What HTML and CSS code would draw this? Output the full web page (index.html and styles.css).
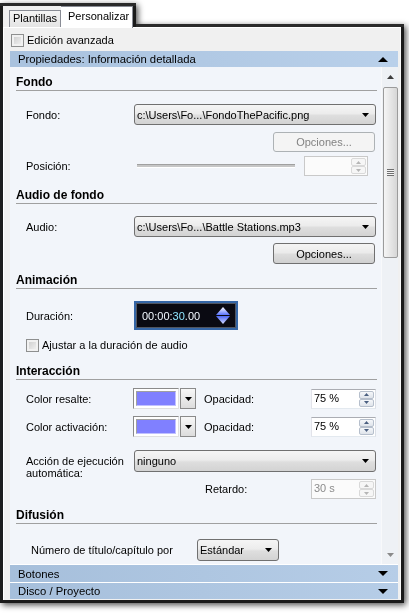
FILE: index.html
```html
<!DOCTYPE html>
<html lang="es">
<head>
<meta charset="utf-8">
<title>Personalizar</title>
<link rel="stylesheet" href="styles.css">
</head>
<body>
<div class="window">
  <div class="tabstrip">
    <div class="tab">Plantillas</div>
    <div class="tab active">Personalizar</div>
  </div>
  <div class="page">
    <div class="adv"><span class="chk"></span><span>Edición avanzada</span></div>
    <div class="props">
      <div class="bar">
        <span>Propiedades: Información detallada</span>
        <svg class="tri" width="10" height="5" viewBox="0 0 10 5"><path d="M0 5H10L5 0Z"/></svg>
      </div>
      <div class="content">
        <div class="main">
          <div class="title">Fondo</div>
          <div class="row r21 m13">
            <span class="lbl">Fondo:</span>
            <div class="combo wide"><span class="ctext">c:\Users\Fo...\FondoThePacific.png</span><svg class="dd" width="7" height="4" viewBox="0 0 7 4"><path d="M0 0H7L3.5 4Z"/></svg></div>
          </div>
          <div class="row r20 m7">
            <div class="btn disabled">Opciones...</div>
          </div>
          <div class="row r20 m4">
            <span class="lbl">Posición:</span>
            <div class="slider"></div>
            <div class="spin disabled pos">
              <span class="val"></span>
              <div class="spinbtns">
                <div class="sb"><svg width="5" height="3" viewBox="0 0 5 3"><path d="M0 3H5L2.5 0Z"/></svg></div>
                <div class="sb"><svg width="5" height="3" viewBox="0 0 5 3"><path d="M0 0H5L2.5 3Z"/></svg></div>
              </div>
            </div>
          </div>

          <div class="title m11">Audio de fondo</div>
          <div class="row r21 m12">
            <span class="lbl">Audio:</span>
            <div class="combo wide"><span class="ctext">c:\Users\Fo...\Battle Stations.mp3</span><svg class="dd" width="7" height="4" viewBox="0 0 7 4"><path d="M0 0H7L3.5 4Z"/></svg></div>
          </div>
          <div class="row r21 m6">
            <div class="btn">Opciones...</div>
          </div>

          <div class="title m8">Animación</div>
          <div class="row r29 m12">
            <span class="lbl">Duración:</span>
            <div class="timebox">
              <span class="time">00:00:<span class="hl">30</span>.00</span>
              <svg class="tarrows" width="16" height="19" viewBox="0 0 16 19">
                <defs>
                  <linearGradient id="gu" x1="0" y1="0" x2="0" y2="1"><stop offset="0" stop-color="#ffffff"/><stop offset="1" stop-color="#5873ff"/></linearGradient>
                  <linearGradient id="gd" x1="0" y1="0" x2="0" y2="1"><stop offset="0" stop-color="#4c66f5"/><stop offset="1" stop-color="#d4dcff"/></linearGradient>
                </defs>
                <path d="M8 1L15 9H1Z" fill="url(#gu)"/>
                <path d="M1 10H15L8 18Z" fill="url(#gd)"/>
              </svg>
            </div>
          </div>
          <div class="row r14 m8 indent">
            <span class="chk"></span><span>Ajustar a la duración de audio</span>
          </div>

          <div class="title m11">Interacción</div>
          <div class="row r21 m8">
            <span class="lbl">Color resalte:</span>
            <div class="colorpick"><div class="sw"><div class="fill"></div></div><div class="cbtn"><svg width="7" height="4" viewBox="0 0 7 4"><path d="M0 0H7L3.5 4Z"/></svg></div></div>
            <span class="lbl2">Opacidad:</span>
            <div class="spin right">
              <span class="val">75 %</span>
              <div class="spinbtns">
                <div class="sb"><svg width="5" height="3" viewBox="0 0 5 3"><path d="M0 3H5L2.5 0Z"/></svg></div>
                <div class="sb"><svg width="5" height="3" viewBox="0 0 5 3"><path d="M0 0H5L2.5 3Z"/></svg></div>
              </div>
            </div>
          </div>
          <div class="row r21 m7">
            <span class="lbl">Color activación:</span>
            <div class="colorpick"><div class="sw"><div class="fill"></div></div><div class="cbtn"><svg width="7" height="4" viewBox="0 0 7 4"><path d="M0 0H7L3.5 4Z"/></svg></div></div>
            <span class="lbl2">Opacidad:</span>
            <div class="spin right">
              <span class="val">75 %</span>
              <div class="spinbtns">
                <div class="sb"><svg width="5" height="3" viewBox="0 0 5 3"><path d="M0 3H5L2.5 0Z"/></svg></div>
                <div class="sb"><svg width="5" height="3" viewBox="0 0 5 3"><path d="M0 0H5L2.5 3Z"/></svg></div>
              </div>
            </div>
          </div>
          <div class="row top m13 racc">
            <span class="lbl two">Acción de ejecución automática:</span>
            <div class="combo wide tall"><span class="ctext">ninguno</span><svg class="dd" width="7" height="4" viewBox="0 0 7 4"><path d="M0 0H7L3.5 4Z"/></svg></div>
          </div>
          <div class="row r20 ret">
            <span>Retardo:</span>
            <div class="spin disabled right">
              <span class="val">30 s</span>
              <div class="spinbtns">
                <div class="sb"><svg width="5" height="3" viewBox="0 0 5 3"><path d="M0 3H5L2.5 0Z"/></svg></div>
                <div class="sb"><svg width="5" height="3" viewBox="0 0 5 3"><path d="M0 0H5L2.5 3Z"/></svg></div>
              </div>
            </div>
          </div>

          <div class="title m8">Difusión</div>
          <div class="row r22 m15 num">
            <span class="lbl3">Número de título/capítulo por</span>
            <div class="combo small tall"><span class="ctext">Estándar</span><svg class="dd" width="7" height="4" viewBox="0 0 7 4"><path d="M0 0H7L3.5 4Z"/></svg></div>
          </div>
        </div>
        <div class="vscroll">
          <div class="sarrow up"><svg width="7" height="4" viewBox="0 0 7 4"><path d="M0 4H7L3.5 0Z"/></svg></div>
          <div class="thumb"><span class="grip"></span></div>
          <div class="sarrow down"><svg width="7" height="4" viewBox="0 0 7 4"><path d="M0 0H7L3.5 4Z"/></svg></div>
        </div>
      </div>
      <div class="bar closed">
        <span>Botones</span>
        <svg class="tri" width="10" height="5" viewBox="0 0 10 5"><path d="M0 0H10L5 5Z"/></svg>
      </div>
      <div class="bar closed">
        <span>Disco / Proyecto</span>
        <svg class="tri" width="10" height="5" viewBox="0 0 10 5"><path d="M0 0H10L5 5Z"/></svg>
      </div>
    </div>
  </div>
</div>
</body>
</html>
```
FILE: styles.css
```css
* { box-sizing: border-box; }
html, body { margin: 0; padding: 0; background: #fff; }
body {
  width: 409px;
  height: 614px;
  overflow: hidden;
  font: 11px "Liberation Sans", Arial, sans-serif;
  color: #000;
}

.window {
  margin: 6px 0 0 3px;
  width: 398px;
  filter: drop-shadow(3px 0 0 #1a1a1a) drop-shadow(-3px 0 0 #1c1c1c) drop-shadow(0 3px 0 #1a1a1a) drop-shadow(0 -3px 0 #2a2a2a) drop-shadow(2px 2px 3px rgba(0,0,0,0.7));
}

/* tabs */
.tabstrip {
  display: flex;
  align-items: flex-end;
  width: 128px;
  height: 21px;
  padding-left: 6px;
  background: #f0f0f0;
}
.tab {
  height: 17px;
  padding: 0 3px;
  border: 1px solid #898c95;
  border-bottom: none;
  background: linear-gradient(#f4f4f4, #e4e4e4);
  line-height: 14px;
  white-space: nowrap;
}
.tab.active {
  position: relative;
  z-index: 1;
  width: 73px;
  height: 22px;
  margin-bottom: -1px;
  border-left: none;
  padding-left: 7px;
  background: #fff;
  line-height: 18px;
}

/* page */
.page {
  height: 573px;
  background: #f0f0f0;
  border-top: 1px solid #fff;
  border-left: 1px solid #fff;
  border-right: 1px solid #fafafa;
  display: flex;
  flex-direction: column;
}
.adv {
  display: flex;
  align-items: center;
  height: 20px;
  margin-top: 2px;
  padding-left: 7px;
}
.chk {
  width: 13px;
  height: 13px;
  margin-right: 3px;
  border: 1px solid #8e8f8f;
  background: linear-gradient(135deg, #c9c9c9, #f6f6f6);
  box-shadow: inset 0 0 0 2px #f1f1f1;
  flex: none;
}

.props {
  margin: 1px 2px 0 6px;
  display: flex;
  flex-direction: column;
}
.bar {
  height: 16px;
  display: flex;
  align-items: center;
  justify-content: space-between;
  padding: 0 10px 0 8px;
  background: linear-gradient(to right, #a9c2de, #b9d0ea);
  font-size: 11.3px;
}
.bar.closed {
  height: 18px;
  border-top: 1px solid #fff;
  background: linear-gradient(to right, #a6bfdb, #b6cde7);
}
.bar.closed + .bar.closed { height: 17px; }
.tri { display: block; fill: #000; }

.content {
  display: flex;
  height: 497px;
  background: #f2f5fa;
}
.main {
  flex: 1;
  overflow: hidden;
}

.title {
  margin: 7px 4px 0 6px;
  height: 17px;
  line-height: 16px;
  border-bottom: 1px solid #a0a0a0;
  font-weight: bold;
  font-size: 12px;
}
.m4 { margin-top: 4px; }
.m6 { margin-top: 6px; }
.m7 { margin-top: 7px; }
.m8 { margin-top: 8px; }
.m11 { margin-top: 11px; }
.m12 { margin-top: 12px; }
.m13 { margin-top: 13px; }
.m15 { margin-top: 15px; }

.row {
  display: flex;
  align-items: center;
  padding: 0 5px 0 16px;
}
.row.top { align-items: flex-start; }
.r14 { height: 14px; }
.r20 { height: 20px; }
.r21 { height: 21px; }
.r22 { height: 22px; }
.r29 { height: 29px; }
.indent { padding-left: 16px; }
.indent .chk { margin-right: 3px; }

.lbl { flex: 0 0 108px; }
.lbl.two { line-height: 12px; margin-top: 5px; padding-right: 8px; }
.racc { height: 29px; }
.ret { padding-left: 195px; }
.num { padding-left: 21px; }
.lbl3 { flex: 0 0 166px; }
.lbl2 { margin-left: 8px; }

/* combos & buttons */
.combo {
  display: flex;
  align-items: center;
  justify-content: space-between;
  height: 21px;
  padding: 0 6px 0 2px;
  border: 1px solid #707070;
  border-radius: 3px;
  background: linear-gradient(#f5f5f5, #ececec 45%, #dedede 55%, #d3d3d3);
  white-space: nowrap;
}
.combo.wide { width: 242px; }
.combo.tall { height: 22px; }
.combo.small { width: 82px; }
.dd { display: block; fill: #000; flex: none; }

.btn {
  margin-left: auto;
  margin-right: 1px;
  width: 102px;
  height: 100%;
  border: 1px solid #707070;
  border-radius: 3px;
  background: linear-gradient(#f4f4f4, #ebebeb 45%, #dddddd 55%, #d0d0d0);
  display: flex;
  align-items: center;
  justify-content: center;
}
.btn.disabled {
  border-color: #adb2b5;
  background: #f4f4f4;
  color: #838383;
}

/* slider */
.slider {
  margin-left: 3px;
  width: 158px;
  height: 4px;
  border-top: 1px solid #a0a0a0;
  border-bottom: 1px solid #fff;
  background: #c6c6c6;
}

/* spin boxes */
.spin {
  display: flex;
  height: 20px;
  padding: 1px;
  border: 1px solid;
  border-color: #abadb3 #dbdfe6 #e3e9ef #e2e3ea;
  background: #fff;
}
.spin.right { width: 65px; margin-left: auto; }
.spin.pos { width: 64px; margin-left: 9px; }
.val { flex: 1; padding-left: 1px; line-height: 15px; }
.spinbtns {
  width: 15px;
  display: flex;
  flex-direction: column;
}
.sb {
  flex: 1;
  display: flex;
  align-items: center;
  justify-content: center;
  border: 1px solid #b6bfcc;
  border-radius: 2px;
  background: linear-gradient(#f5f7fa, #dfe4eb);
}
.sb svg { display: block; fill: #4a5f80; }
.spin.disabled { border-color: #c9c9c9; background: #fbfbfb; color: #8b8b8b; }
.spin.disabled .sb { border-color: #d9d9d9; background: #f6f6f6; }
.spin.disabled .sb svg { fill: #b5b5b5; }

/* time */
.timebox {
  width: 104px;
  height: 29px;
  display: flex;
  align-items: center;
  justify-content: space-between;
  padding: 0 5px 0 6px;
  border: 2px solid #3566a6;
  box-shadow: inset 0 0 0 1px #505560;
  background: #0a0a12;
}
.time { color: #f2f8ff; font-size: 11px; }
.time .hl { color: #8fe6ff; }
.tarrows { display: block; }

/* color picker */
.colorpick {
  display: flex;
  width: 63px;
  height: 21px;
  margin-left: -1px;
}
.sw {
  width: 46px;
  height: 21px;
  padding: 2px;
  border: 1px solid;
  border-color: #8a8a8a #e0e0e0 #e0e0e0 #8a8a8a;
  background: #fff;
}
.fill {
  height: 100%;
  background: #8080ff;
  border: 1px solid;
  border-color: #a0a0a0 #c0c0ff #c0c0ff #a0a0a0;
}
.cbtn {
  width: 16px;
  height: 21px;
  margin-left: 1px;
  display: flex;
  align-items: center;
  justify-content: center;
  border: 1px solid #8a8a8a;
  background: linear-gradient(#f8f8f8, #dcdcdc);
}
.cbtn svg { display: block; fill: #000; }

/* scrollbar */
.vscroll {
  width: 17px;
  display: flex;
  flex-direction: column;
  align-items: center;
  background: #eef1f5;
  border-left: 1px solid #f8f9fb;
}
.sarrow {
  height: 19px;
  width: 15px;
  display: flex;
  align-items: center;
  justify-content: center;
}
.sarrow svg { display: block; fill: #3c3c3c; }
.sarrow.down { margin-top: auto; height: 18px; }
.sarrow.down svg { fill: #8a8a8a; }
.thumb {
  margin-top: 1px;
  width: 15px;
  height: 171px;
  border: 1px solid #9b9b9b;
  border-radius: 2px;
  background: linear-gradient(to right, #f5f5f5, #e6e6e6 50%, #d6d6d6);
  display: flex;
  align-items: center;
  justify-content: center;
}
.grip {
  width: 7px;
  height: 7px;
  background: repeating-linear-gradient(#6f6f6f 0 1px, #f4f4f4 1px 2px);
}
```
